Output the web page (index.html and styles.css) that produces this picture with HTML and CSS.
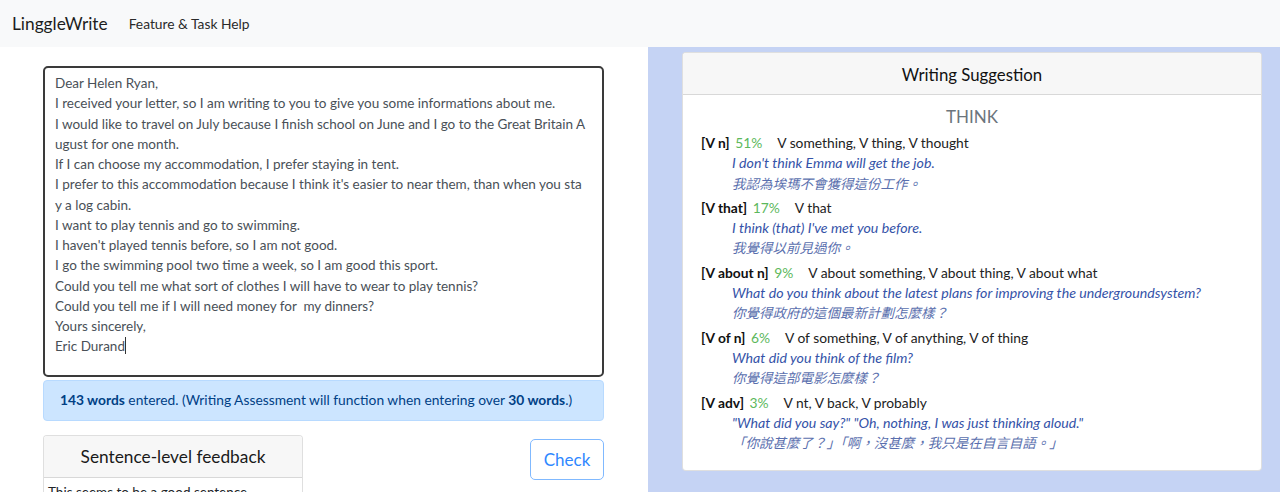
FILE: index.html
```html
<!DOCTYPE html>
<html lang="en">
<head>
<meta charset="utf-8">
<title>LinggleWrite</title>
<link rel="stylesheet" href="styles.css">
</head>
<body>
<nav class="navbar">
  <span class="brand">LinggleWrite</span>
  <span class="nav-link">Feature &amp; Task Help</span>
</nav>
<main class="layout">
  <section class="left-col">
    <div class="editor">
      <div class="line">Dear Helen Ryan,</div>
      <div class="line">I received your letter, so I am writing to you to give you some informations about me.</div>
      <div class="line">I would like to travel on July because I finish school on June and I go to the Great Britain A</div>
      <div class="line">ugust for one month.</div>
      <div class="line">If I can choose my accommodation, I prefer staying in tent.</div>
      <div class="line">I prefer to this accommodation because I think it's easier to near them, than when you sta</div>
      <div class="line">y a log cabin.</div>
      <div class="line">I want to play tennis and go to swimming.</div>
      <div class="line">I haven't played tennis before, so I am not good.</div>
      <div class="line">I go the swimming pool two time a week, so I am good this sport.</div>
      <div class="line">Could you tell me what sort of clothes I will have to wear to play tennis?</div>
      <div class="line">Could you tell me if I will need money for &nbsp;my dinners?</div>
      <div class="line">Yours sincerely,</div>
      <div class="line">Eric Durand<span class="caret"></span></div>
    </div>
    <div class="alert"><b>143 words</b> entered. (Writing Assessment will function when entering over <b>30 words</b>.)</div>
    <div class="bottom-row">
      <div class="card feedback-card">
        <div class="card-header">Sentence-level feedback</div>
        <div class="feedback-body">This seems to be a good sentence.</div>
      </div>
      <button class="btn-check">Check</button>
    </div>
  </section>
  <section class="right-col">
    <div class="card suggest-card">
      <div class="card-header">Writing Suggestion</div>
      <div class="suggest-body">
        <div class="word">THINK</div>
        <div class="pattern">
          <div class="pat-head"><b>[V n]</b> <span class="pct">51%</span><span class="colls">V something, V thing, V thought</span></div>
          <div class="ex">I don't think Emma will get the job.</div>
          <div class="ex zh">我認為埃瑪不會獲得這份工作。</div>
        </div>
        <div class="pattern">
          <div class="pat-head"><b>[V that]</b> <span class="pct">17%</span><span class="colls">V that</span></div>
          <div class="ex">I think (that) I've met you before.</div>
          <div class="ex zh">我覺得以前見過你。</div>
        </div>
        <div class="pattern">
          <div class="pat-head"><b>[V about n]</b> <span class="pct">9%</span><span class="colls">V about something, V about thing, V about what</span></div>
          <div class="ex">What do you think about the latest plans for improving the undergroundsystem?</div>
          <div class="ex zh">你覺得政府的這個最新計劃怎麼樣？</div>
        </div>
        <div class="pattern">
          <div class="pat-head"><b>[V of n]</b> <span class="pct">6%</span><span class="colls">V of something, V of anything, V of thing</span></div>
          <div class="ex">What did you think of the film?</div>
          <div class="ex zh">你覺得這部電影怎麼樣？</div>
        </div>
        <div class="pattern">
          <div class="pat-head"><b>[V adv]</b> <span class="pct">3%</span><span class="colls">V nt, V back, V probably</span></div>
          <div class="ex">"What did you say?" "Oh, nothing, I was just thinking aloud."</div>
          <div class="ex zh">「你說甚麼了？」「啊，沒甚麼，我只是在自言自語。」</div>
        </div>
      </div>
    </div>
  </section>
</main>
</body>
</html>
```

FILE: styles.css
```css
* { box-sizing: border-box; }
html, body { margin: 0; height: 100%; }
body {
  font-family: Lato, "Noto Sans CJK TC", sans-serif;
  font-size: 13.5px;
  line-height: 1.5;
  color: #212529;
  background: #fff;
  overflow: hidden;
}
.navbar {
  height: 47px;
  background: #f8f9fa;
  display: flex;
  align-items: center;
  padding: 1px 12px 0;
}
.brand { font-size: 17.3px; color: #1d1d1d; margin-right: 21px; }
.nav-link { font-size: 13.8px; color: #2a2a2a; }

.layout {
  display: grid;
  grid-template-columns: 648px 1fr;
  height: 445px;
}
.left-col { padding: 19px 44px 0 43px; }
.editor {
  height: 311px;
  border: 2px solid #3a3a3a;
  border-radius: 5px;
  padding: 5px 10px;
  color: #495057;
  line-height: 20.25px;
}
.line { white-space: nowrap; }
.caret {
  display: inline-block;
  width: 1px;
  height: 17px;
  background: #333;
  vertical-align: -3px;
}
.alert {
  margin-top: 3px;
  height: 41px;
  background: #cce5ff;
  border: 1px solid #b8daff;
  border-radius: 4px;
  color: #004085;
  padding: 9px 16px 0;
  font-size: 13.8px;
  line-height: 20px;
  white-space: nowrap;
}
.alert b { font-weight: 700; }
.bottom-row {
  margin-top: 14px;
  display: flex;
  justify-content: space-between;
  align-items: flex-start;
}
.card {
  background: #fff;
  border: 1px solid rgba(0,0,0,.125);
  border-radius: 4px;
  overflow: hidden;
}
.card-header {
  height: 42px;
  background: #f7f7f7;
  border-bottom: 1px solid rgba(0,0,0,.125);
  display: flex;
  align-items: center;
  justify-content: center;
  font-size: 17.3px;
  color: #1a1a1a;
}
.feedback-card { width: 260px; }
.feedback-body { padding: 4px 4px; }
.btn-check {
  margin-top: 4px;
  width: 74px;
  height: 41px;
  background: #fff;
  border: 1px solid #80b9ff;
  border-radius: 5px;
  color: #2f88ff;
  font-family: inherit;
  font-size: 17px;
  padding: 0;
}
.right-col {
  background: #c5d3f4;
  padding: 5px 18px 0 34px;
}
.suggest-card { height: 419px; }
.suggest-card .card-header { font-size: 16.8px; color: #111; padding-top: 2px; }
.suggest-body { padding: 10px 18px 0; }
.word {
  text-align: center;
  font-size: 17px;
  color: #6c757d;
  line-height: 24px;
  margin-bottom: 4px;
}
.pattern { margin-bottom: 4px; line-height: 20.3px; }
.pat-head { font-size: 13.8px; }
.pat-head b { color: #111; font-weight: 700; margin-right: 2px; }
.pct { color: #5cb85c; }
.colls { margin-left: 15px; color: #222; }
.ex {
  padding-left: 31px;
  font-style: italic;
  font-size: 14.2px;
  color: #3553a8;
}
.zh { color: #5a6fae; font-size: 13.5px; }
```
